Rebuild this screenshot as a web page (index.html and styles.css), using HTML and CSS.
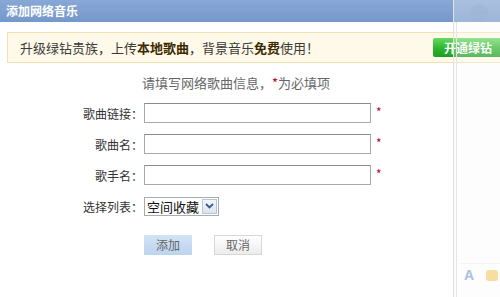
FILE: index.html
```html
<!DOCTYPE html>
<html lang="zh">
<head>
<meta charset="utf-8">
<link rel="stylesheet" href="styles.css">
</head>
<body>
<div class="dialog">
  <div class="titlebar">添加网络音乐</div>
  <div class="banner">
    <span class="banner-text">升级绿钻贵族，上传<b>本地歌曲</b>，背景音乐<b>免费</b>使用！</span>
    <span class="green-btn">开通绿钻</span>
  </div>
  <div class="form">
    <div class="hint">请填写网络歌曲信息，<span class="star">*</span>为必填项</div>
    <div class="row">
      <label class="label">歌曲链接：</label>
      <span class="input"></span>
      <span class="req">*</span>
    </div>
    <div class="row">
      <label class="label">歌曲名：</label>
      <span class="input"></span>
      <span class="req">*</span>
    </div>
    <div class="row">
      <label class="label">歌手名：</label>
      <span class="input"></span>
      <span class="req">*</span>
    </div>
    <div class="row">
      <label class="label">选择列表：</label>
      <span class="select"><span class="select-text">空间收藏</span><span class="select-arrow"><svg width="9" height="6" viewBox="0 0 9 6"><path d="M1 1 L4.5 4.5 L8 1" fill="none" stroke="#3a5a8c" stroke-width="1.8"/></svg></span></span>
    </div>
    <div class="buttons">
      <span class="btn btn-add">添加</span>
      <span class="btn btn-cancel">取消</span>
    </div>
  </div>
  <div class="side">
    <div class="side-circle"></div>
    <div class="side-tools">
      <span class="side-a">A</span>
      <span class="side-emo"></span>
    </div>
  </div>
</div>
</body>
</html>
```

FILE: styles.css
```css
html, body {
  margin: 0;
  padding: 0;
  background: #fff;
  overflow: hidden;
}
.dialog {
  position: relative;
  width: 500px;
  height: 297px;
  overflow: hidden;
  font-family: "Noto Sans CJK SC", "Liberation Sans", sans-serif;
  color: #333;
  background: #fff;
}
.titlebar {
  height: 22px;
  line-height: 22px;
  padding-left: 6px;
  background: linear-gradient(#88a8d6, #7598cb);
  color: #fff;
  font-size: 12px;
  font-weight: bold;
}
.banner {
  display: flex;
  align-items: center;
  justify-content: space-between;
  margin: 10px 0 0 7px;
  width: 520px;
  height: 29px;
  background: #fef9e8;
  border: 1px solid #f2e2b2;
  box-sizing: content-box;
}
.banner-text {
  padding-left: 12px;
  font-size: 13px;
  color: #3a3a3a;
}
.banner-text b {
  color: #3d2a00;
}
.green-btn {
  margin-right: 13px;
  width: 82px;
  height: 19px;
  line-height: 19px;
  padding-left: 11px;
  box-sizing: border-box;
  border-radius: 2px;
  background: linear-gradient(#66d963, #2cb52b 55%, #1e9d1f);
  color: #fff;
  font-size: 12px;
  font-weight: bold;
}
.form {
  display: flex;
  flex-direction: column;
  gap: 11px;
  margin-top: 11px;
}
.hint {
  padding-left: 142px;
  height: 18px;
  line-height: 18px;
  font-size: 13px;
  color: #666;
}
.star {
  color: #b8001c;
}
.row {
  display: flex;
  align-items: center;
  height: 20px;
}
.label {
  width: 144px;
  flex: none;
  text-align: right;
  font-size: 12px;
  color: #333;
  padding-right: 1px;
  box-sizing: border-box;
}
.input {
  width: 227px;
  height: 20px;
  box-sizing: border-box;
  border: 1px solid #a9a9a9;
  border-top-color: #8c8c8c;
  background: #fff;
}
.req {
  margin-left: 5px;
  color: #c0002a;
  font-size: 12px;
  line-height: 12px;
  align-self: flex-start;
  padding-top: 3px;
}
.select {
  display: flex;
  align-items: center;
  height: 19px;
  box-sizing: border-box;
  border: 1px solid #a5acb2;
  background: #fff;
}
.select-text {
  font-size: 13px;
  padding: 0 3px 0 2px;
  color: #111;
  line-height: 17px;
}
.select-arrow {
  display: flex;
  align-items: center;
  justify-content: center;
  width: 15px;
  height: 15px;
  margin-right: 1px;
  border: 1px solid #b8c4d4;
  box-sizing: border-box;
  background: linear-gradient(#f4f6fa, #dde4ee);
}
.buttons {
  display: flex;
  gap: 22px;
  padding-left: 144px;
  margin-top: 8px;
}
.btn {
  width: 48px;
  height: 20px;
  line-height: 20px;
  text-align: center;
  font-size: 12px;
  color: #666;
  box-sizing: border-box;
}
.btn-add {
  background: linear-gradient(#d2e3f5, #bcd4ee);
}
.btn-cancel {
  border: 1px solid #d8d8d8;
  line-height: 18px;
  background: linear-gradient(#ffffff, #ececec);
}
.side {
  position: absolute;
  left: 453px;
  top: 0;
  width: 47px;
  height: 297px;
  background: rgba(250, 250, 250, 0.3);
  border-left: 1px solid #e2e2e2;
}
.side::before {
  content: "";
  position: absolute;
  left: 2px;
  top: 22px;
  bottom: 0;
  width: 1px;
  background: #e6e6e6;
}
.side-circle {
  position: absolute;
  left: 16px;
  top: 4px;
  width: 18px;
  height: 18px;
  border-radius: 50%;
  background: rgba(160, 180, 212, 0.6);
}
.side-tools {
  position: absolute;
  left: 6px;
  top: 263px;
  width: 60px;
  height: 22px;
  display: flex;
  align-items: center;
  gap: 12px;
  border-top: 1px solid #f3f3f3;
}
.side-a {
  font-family: "Liberation Sans", sans-serif;
  font-weight: bold;
  font-size: 14px;
  color: #a9c0e0;
  padding-left: 4px;
}
.side-emo {
  width: 12px;
  height: 11px;
  border-radius: 3px;
  background: #f6dea0;
}
```
